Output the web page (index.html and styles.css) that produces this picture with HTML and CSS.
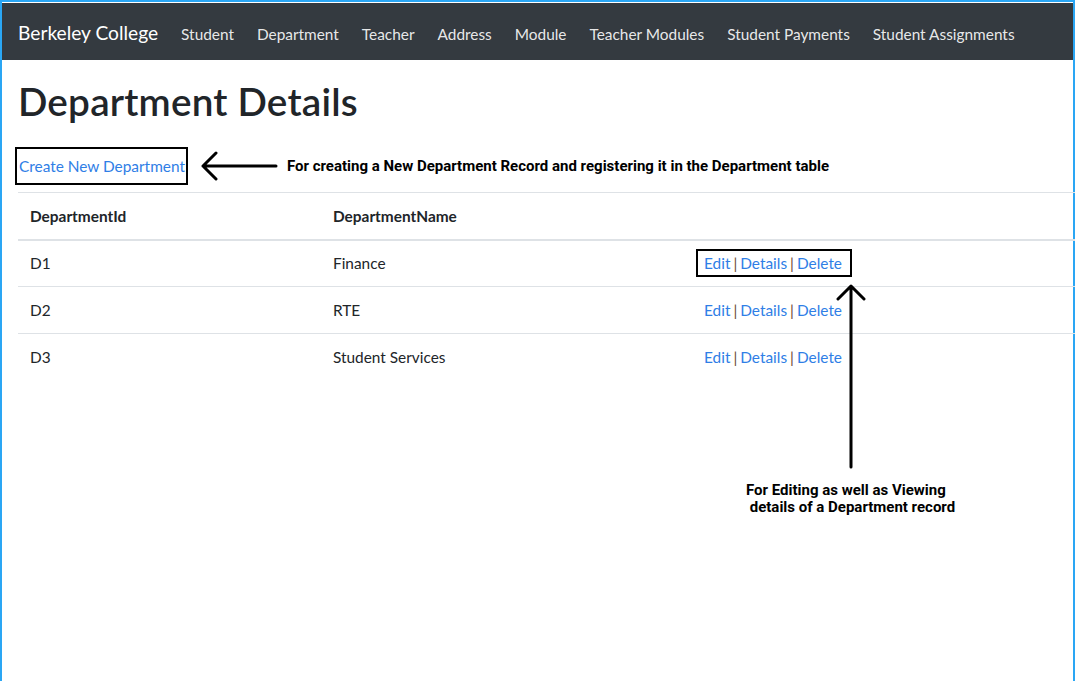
FILE: index.html
```html
<!DOCTYPE html>
<html lang="en">
<head>
<meta charset="utf-8">
<title>Department Details</title>
<link rel="stylesheet" href="styles.css">
</head>
<body>
<div class="frame">
  <nav class="navbar">
    <a class="brand" href="#">Berkeley College</a>
    <ul class="nav-links">
      <li><a href="#">Student</a></li>
      <li><a href="#">Department</a></li>
      <li><a href="#">Teacher</a></li>
      <li><a href="#">Address</a></li>
      <li><a href="#">Module</a></li>
      <li><a href="#">Teacher Modules</a></li>
      <li><a href="#">Student Payments</a></li>
      <li><a href="#">Student Assignments</a></li>
    </ul>
  </nav>
  <main class="content">
    <h1 class="title">Department Details</h1>
    <div class="create-row">
      <a class="create-link boxed" href="#">Create New Department</a>
      <svg class="arrow-left" width="80" height="34" viewBox="0 0 80 34">
        <path d="M76 17 H3 M16 4 L3 17 L16 30" fill="none" stroke="#000" stroke-width="3" stroke-linecap="round" stroke-linejoin="round"/>
      </svg>
      <span class="note">For creating a New Department Record and registering it in the Department table</span>
    </div>
    <table class="table">
      <thead>
        <tr><th class="c1">DepartmentId</th><th class="c2">DepartmentName</th><th></th></tr>
      </thead>
      <tbody>
        <tr><td>D1</td><td>Finance</td><td><span class="actions boxed-actions"><a href="#">Edit</a> <span class="sep">|</span> <a href="#">Details</a> <span class="sep">|</span> <a href="#">Delete</a></span></td></tr>
        <tr><td>D2</td><td>RTE</td><td><span class="actions"><a href="#">Edit</a> <span class="sep">|</span> <a href="#">Details</a> <span class="sep">|</span> <a href="#">Delete</a></span></td></tr>
        <tr><td>D3</td><td>Student Services</td><td><span class="actions"><a href="#">Edit</a> <span class="sep">|</span> <a href="#">Details</a> <span class="sep">|</span> <a href="#">Delete</a></span></td></tr>
      </tbody>
    </table>
  </main>
  <div class="callout">
    <svg class="arrow-up" width="32" height="186" viewBox="0 0 32 186">
      <path d="M16 2 V183 M3 15 L16 2 L29 15" fill="none" stroke="#000" stroke-width="3" stroke-linecap="round" stroke-linejoin="round"/>
    </svg>
    <p class="note callout-text">For Editing as well as Viewing<br>&nbsp;details of a Department record</p>
  </div>
</div>
</body>
</html>
```
FILE: styles.css
```css
* { box-sizing: border-box; }
html, body { margin: 0; padding: 0; height: 100%; background: #fff; }
body { font-family: Lato, "Noto Sans", sans-serif; color: #212529; }

.frame {
  position: relative;
  height: 100%;
  border: 2px solid #2aa6f4;
  border-bottom: none;
  padding-top: 1px;
}

.navbar {
  display: flex;
  align-items: center;
  height: 57px;
  background: #343a40;
  padding: 4px 16px 0 16px;
}
.brand {
  color: #fff;
  font-size: 19.2px;
  text-decoration: none;
  margin-right: 23px;
  padding-bottom: 2px;
}
.nav-links {
  display: flex;
  gap: 23px;
  list-style: none;
  margin: 0;
  padding: 0;
}
.nav-links a {
  color: rgba(255,255,255,0.9);
  text-decoration: none;
  font-size: 15.4px;
}

.content { padding: 0 0 0 16px; }

.title {
  font-size: 38.7px;
  font-weight: 600;
  line-height: 48px;
  margin: 17px 0 0 0;
  letter-spacing: 0.2px;
}

.create-row {
  display: flex;
  align-items: center;
  margin-top: 22px;
  margin-left: -3px;
  height: 38px;
}
.boxed {
  border: 2px solid #000;
  padding: 0 1px 0 2px;
  height: 38px;
  display: flex;
  align-items: center;
}
.create-link {
  color: #2f7ee6;
  text-decoration: none;
  font-size: 15.4px;
}
.arrow-left { margin-left: 12px; }
.note {
  font-family: Roboto, "Liberation Sans", sans-serif;
  font-weight: 700;
  font-size: 15px;
  color: #000;
}
.create-row .note { margin-left: 7px; }

.table {
  border-collapse: collapse;
  width: calc(100% + 2px);
  margin-top: 7px;
  font-size: 15.4px;
}
.table th, .table td {
  text-align: left;
  padding: 0 12px;
  height: 47px;
  border-top: 1px solid #dee2e6;
  vertical-align: middle;
}
.table thead th {
  border-bottom: 2px solid #dee2e6;
  font-weight: 700;
  height: 47px;
  padding-top: 1px;
}
.table .c1 { width: 303px; }
.table .c2 { width: 370px; }

.actions {
  display: inline-flex;
  align-items: center;
  gap: 3px;
  padding: 0 8px 0 6px;
  margin-left: -7px;
  height: 28px;
  border: 2px solid transparent;
}
.boxed-actions { border-color: #000; }
.actions a { color: #2f7ee6; text-decoration: none; }
.sep { color: #6b4b32; }

.callout {
  position: absolute;
  left: 742px;
  top: 282px;
  width: 240px;
}
.arrow-up { display: block; margin-left: 91px; }
.callout-text {
  margin: 12px 0 0 2px;
  line-height: 17px;
}
```
